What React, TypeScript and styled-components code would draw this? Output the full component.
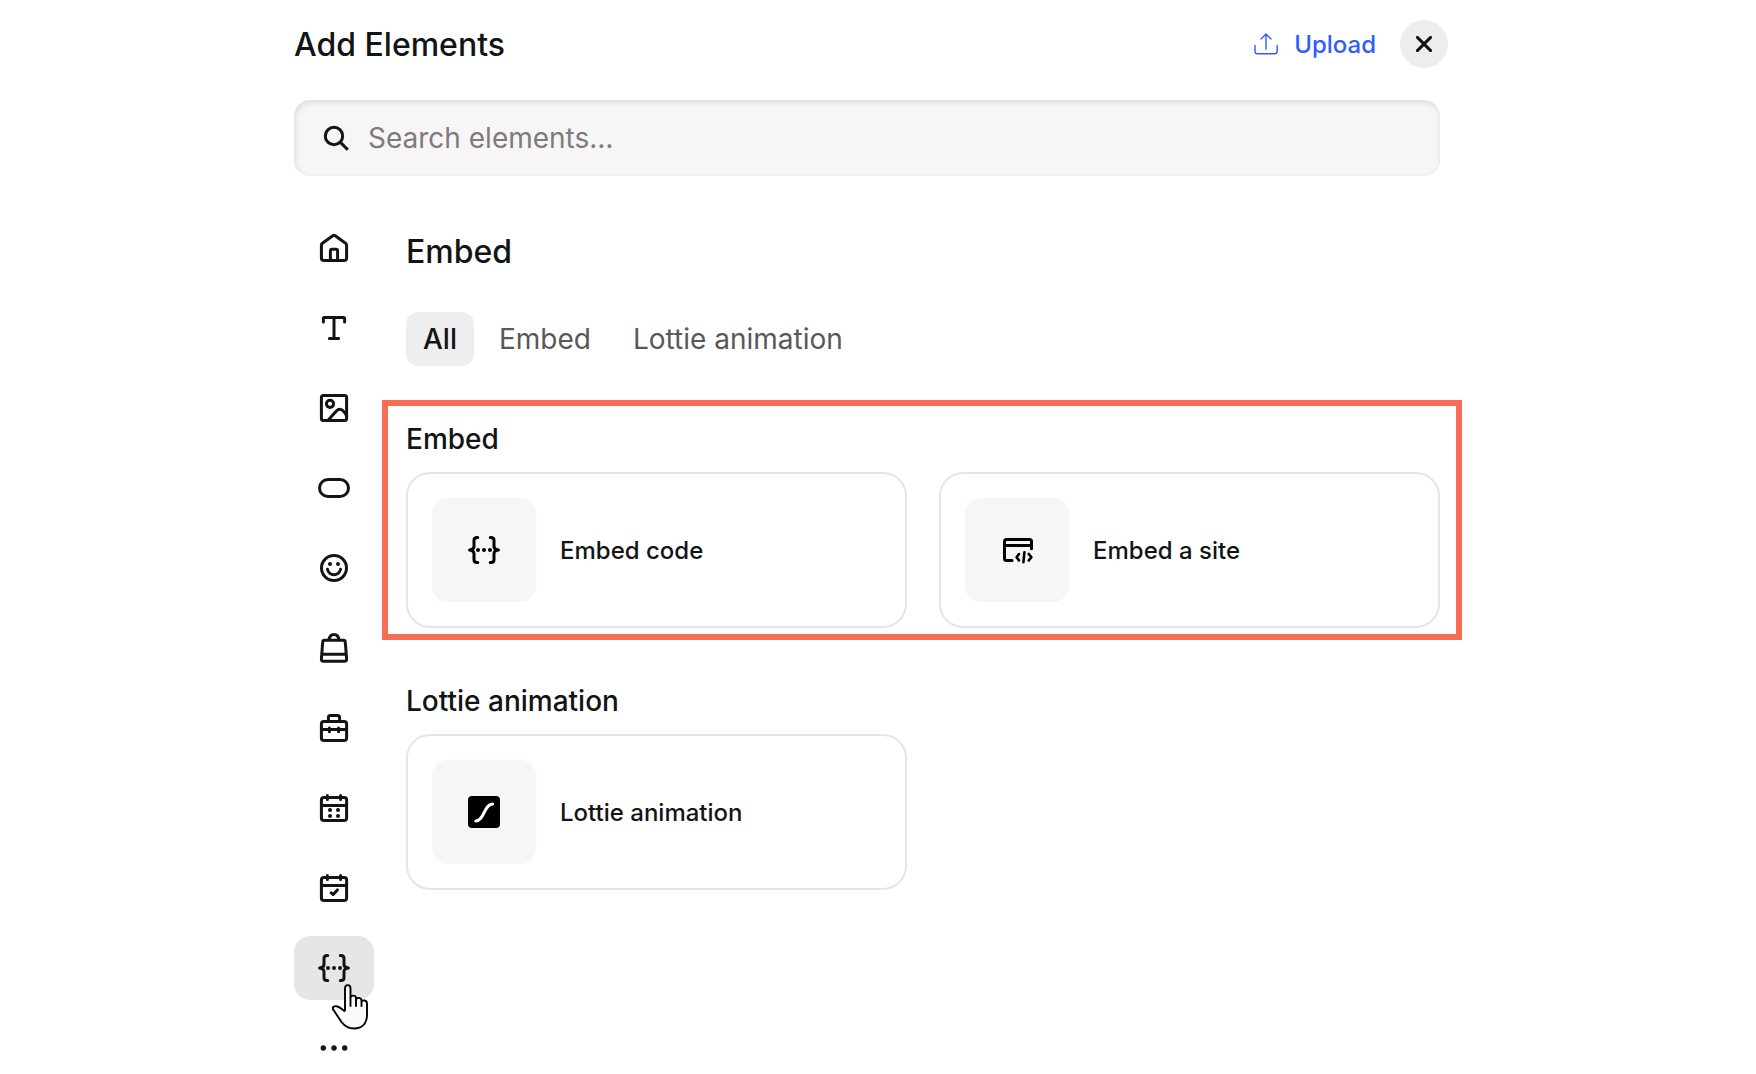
import React from 'react';
import styled, { createGlobalStyle } from 'styled-components';

const GlobalStyle = createGlobalStyle`
  *, *::before, *::after { box-sizing: border-box; }
  body {
    margin: 0;
    background: #fff;
    color: #131415;
    font-family: Inter, "Liberation Sans", sans-serif;
  }
  button, input { font: inherit; color: inherit; }
  button { border: 0; padding: 0; background: none; cursor: pointer; }
  h1, h2, h3 { margin: 0; font-weight: 500; }
`;

const Panel = styled.main`
  height: 100vh;
  max-width: 1168px;
  margin: 0 auto;
  overflow: hidden;
`;

const Header = styled.header`
  display: flex;
  align-items: center;
  gap: 24px;
  padding: 20px 14px 32px 0;
`;

const Title = styled.h1`
  flex: 1;
  padding-top: 2px;
  font-size: 32px;
  line-height: 46px;
`;

const Label = styled.span`
  padding-top: 2px;
  font-size: 24px;
  line-height: 32px;
  font-weight: 500;
`;

const UploadButton = styled.button`
  display: flex;
  align-items: center;
  gap: 16px;
  color: #2f5dff;
`;

const CloseButton = styled.button`
  display: grid;
  place-items: center;
  width: 48px;
  height: 48px;
  border-radius: 50%;
  background: #eee;
`;

const SearchBox = styled.label`
  display: flex;
  align-items: center;
  gap: 16px;
  height: 76px;
  margin-right: 22px;
  padding: 0 26px;
  border-radius: 16px;
  background: #f7f5f6;
  box-shadow: inset 1px 2px 6px rgba(0, 0, 0, 0.12);
`;

const SearchInput = styled.input`
  flex: 1;
  min-width: 0;
  border: 0;
  outline: 0;
  padding: 0;
  background: transparent;
  font-size: 28px;
  line-height: 36px;
  &::placeholder { color: #7d7b7c; opacity: 1; }
`;

const Body = styled.div`
  display: flex;
  gap: 8px;
  margin-top: 40px;
`;

const Sidebar = styled.nav`
  display: flex;
  flex-direction: column;
  gap: 16px;
  width: 80px;
  flex: none;
`;

const NavButton = styled.button<{ $active?: boolean }>`
  position: relative;
  display: grid;
  place-items: center;
  height: 64px;
  border-radius: 16px;
  background: ${(p) => (p.$active ? '#e6e6e6' : 'transparent')};
`;

const Pointer = styled.svg`
  position: absolute;
  z-index: 1;
  left: 38px;
  top: 48px;
`;

const Content = styled.div`
  flex: 1;
  min-width: 0;
`;

const Heading = styled.h2`
  padding: 16px 24px 20px;
  font-size: 32px;
  line-height: 40px;
`;

const Tabs = styled.div`
  display: flex;
  gap: 8px;
  padding: 20px 24px 34px;
`;

const Tab = styled.button<{ $active?: boolean }>`
  height: 54px;
  padding: 0 17px;
  border-radius: 12px;
  background: ${(p) => (p.$active ? '#eee' : 'transparent')};
  color: ${(p) => (p.$active ? '#131415' : '#595858')};
  font-size: 28px;
  line-height: 36px;
  font-weight: ${(p) => (p.$active ? 500 : 400)};
`;

const Section = styled.section<{ $highlighted?: boolean }>`
  margin-bottom: 22px;
  padding: 12px 16px 6px 18px;
  border: 6px solid ${(p) => (p.$highlighted ? '#f86d56' : 'transparent')};
`;

const SectionTitle = styled.h3`
  margin-bottom: 12px;
  font-size: 28px;
  line-height: 42px;
`;

const CardGrid = styled.div`
  display: grid;
  grid-template-columns: 1fr 1fr;
  gap: 32px;
`;

const Card = styled.button`
  display: flex;
  align-items: center;
  gap: 24px;
  padding: 24px;
  border: 2px solid #e5e5e5;
  border-radius: 24px;
  background: #fff;
  text-align: left;
`;

const Thumb = styled.span`
  display: grid;
  place-items: center;
  width: 104px;
  height: 104px;
  border-radius: 16px;
  background: #f7f5f6;
  color: #000;
`;

const Svg = styled.svg<{ $stroke?: number }>`
  display: block;
  fill: none;
  stroke: currentColor;
  stroke-width: ${(p) => p.$stroke ?? 3};
  stroke-linecap: round;
  stroke-linejoin: round;
`;

const Icon = ({ children }: { children: React.ReactNode }) => (
  <Svg width="32" height="32" viewBox="0 0 32 32" aria-hidden="true">
    {children}
  </Svg>
);

const Dot = ({ x, y, r = 2 }: { x: number; y: number; r?: number }) => (
  <circle cx={x} cy={y} r={r} fill="currentColor" stroke="none" />
);

const HomeIcon = () => (
  <Icon>
    <path d="M3.4 13.2v12.9q0 2.5 2.5 2.5h20.2q2.5 0 2.5-2.5V13.2q0-1.3-1-2L17.2 3.7q-1.2-.9-2.4 0L4.4 11.2q-1 .7-1 2Z" />
    <path d="M12.4 28.6V19q0-1.7 1.7-1.7h3.8q1.7 0 1.7 1.7v9.600" />
  </Icon>
);

const TextIcon = () => (
  <Icon>
    <path d="M5.4 10V6.4q0-1 1-1h19.2q1 0 1 1V10M16 5.4v21.2M11.4 26.6h9.2" />
  </Icon>
);

const ImageIcon = () => (
  <Icon>
    <rect x="3.4" y="3.4" width="25.2" height="25.2" rx="2" />
    <circle cx="12" cy="11.8" r="3.6" />
    <path d="M9.8 28.4l8.600-9.400q3-3.200 6.200-.6 2.600 2.200 4 5.600" />
  </Icon>
);

const ButtonIcon = () => (
  <Icon>
    <rect x="1.500" y="7.500" width="29" height="17" rx="8.500" />
  </Icon>
);

const SmileIcon = () => (
  <Icon>
    <circle cx="16" cy="16" r="12.500" />
    <Dot x={12} y={12} />
    <Dot x={20} y={12} />
    <path d="M9.500 17.300c1.200 7.200 11.800 7.200 13 0" />
  </Icon>
);

const BagIcon = () => (
  <Icon>
    <path d="M6.700 8.300h18.600q1.900 0 2 1.900l1.300 16.600q.2 2.500-2.200 2.500H5.600q-2.400 0-2.200-2.500L4.700 10.200q.1-1.900 2-1.900ZM4 22.300h24" />
    <path d="M11 7.600c1.200-6.900 8.800-6.900 10 0" />
  </Icon>
);

const BriefcaseIcon = () => (
  <Icon>
    <rect x="3.4" y="9.4" width="25.2" height="19.2" rx="2.500" />
    <path d="M10.400 9V5.400q0-2 2-2h7.200q2 0 2 2V9M3.400 17.600h25.200M11.400 16v3.800M20.600 16v3.800" />
  </Icon>
);

const CalendarFrame = () => (
  <>
    <rect x="3.4" y="5.4" width="25.2" height="23.2" rx="2.500" />
    <path d="M3.400 13.400h25.200M9.400 3.400v4.200M22.600 3.400v4.200" />
  </>
);

const CalendarIcon = () => (
  <Icon>
    <CalendarFrame />
    <Dot x={12} y={18} />
    <Dot x={20} y={18} />
    <Dot x={12} y={24} />
    <Dot x={20} y={24} />
  </Icon>
);

const CalendarCheckIcon = () => (
  <Icon>
    <CalendarFrame />
    <path d="M13.200 20.900l2 1.600 4.200-4.600" />
  </Icon>
);

const BracesIcon = () => (
  <Icon>
    <path d="M9.700 3.400H9Q6 3.400 6 6.400v6q0 3-4.400 3.600Q6 16.600 6 19.600v6q0 3 3 3h.7" />
    <path d="M22.300 3.400h.7q3 0 3 3v6q0 3 4.400 3.600-4.400.6-4.400 3.600v6q0 3-3 3h-.7" />
    <Dot x={10} y={16} />
    <Dot x={16} y={16} />
    <Dot x={22} y={16} />
  </Icon>
);

const MoreIcon = () => (
  <Icon>
    <Dot x={5.3} y={16} r={2.7} />
    <Dot x={16} y={16} r={2.7} />
    <Dot x={26.7} y={16} r={2.7} />
  </Icon>
);

const SiteIcon = () => (
  <Icon>
    <path d="M11 26.600H5.500q-2 0-2-2V7.500q0-2 2-2h23q2 0 2 2v7.200M3.500 11.500h27" />
    <path d="M18 20l-2.400 3.200L18 26.400M27.800 20l2.600 3.200-2.600 3.200M23.400 18.200l-1 10" strokeWidth="2.600" />
  </Icon>
);

const LottieIcon = () => (
  <Icon>
    <rect width="32" height="32" rx="4" fill="#000" stroke="none" />
    <path d="M7.800 25c8.400 0 8.200-17 16.800-17" stroke="#fff" />
  </Icon>
);

const UploadIcon = () => (
  <Svg width="24" height="24" viewBox="0 0 24 24" $stroke={1.4} aria-hidden="true">
    <path d="M1 13.500v5.700q0 2.600 2.600 2.600h17q2.600 0 2.600-2.600v-5.700M12 17.300V2M7 7l5-5 5 5" />
  </Svg>
);

const CloseIcon = () => (
  <Svg width="16" height="16" viewBox="0 0 16 16" aria-hidden="true">
    <path d="M1.400 1.400l13.200 13.200M14.600 1.400L1.400 14.600" />
  </Svg>
);

const SearchIcon = () => (
  <Svg width="32" height="32" viewBox="0 0 32 32" aria-hidden="true">
    <circle cx="14" cy="14" r="8.700" />
    <path d="M20.400 20.400l7.400 7.400" strokeLinecap="butt" />
  </Svg>
);

const PointerIcon = () => (
  <Pointer width="37" height="46" viewBox="0 0 37 46" aria-hidden="true">
    <path
      d="M13 27V4.500C13 0 18.500 0 18.500 4.500V22v-8.500c1-2.500 5-2.500 5.500 0V22v-6.500c1-2.500 5-2 5.500.5v6-4c1-2.500 5.500-2 5.500 1.500v11c0 9-5 14-13 14-6 0-9.500-2.500-12.500-6.500L1.500 26c-2-3 1-4.500 4-3.500 3 1 5 3 7.500 5"
      fill="#fafafa"
      stroke="#000"
      strokeWidth="1.900"
      strokeLinejoin="round"
    />
  </Pointer>
);

const navItems = [
  { label: 'Quick Add', icon: <HomeIcon /> },
  { label: 'Text', icon: <TextIcon /> },
  { label: 'Media', icon: <ImageIcon /> },
  { label: 'Buttons', icon: <ButtonIcon /> },
  { label: 'Decorative', icon: <SmileIcon /> },
  { label: 'Store', icon: <BagIcon /> },
  { label: 'Business', icon: <BriefcaseIcon /> },
  { label: 'Events', icon: <CalendarIcon /> },
  { label: 'Bookings', icon: <CalendarCheckIcon /> },
  { label: 'Embed', icon: <BracesIcon />, active: true },
  { label: 'More', icon: <MoreIcon /> },
];

const tabs = ['All', 'Embed', 'Lottie animation'];

const sections = [
  {
    title: 'Embed',
    highlighted: true,
    cards: [
      { label: 'Embed code', icon: <BracesIcon /> },
      { label: 'Embed a site', icon: <SiteIcon /> },
    ],
  },
  {
    title: 'Lottie animation',
    highlighted: false,
    cards: [{ label: 'Lottie animation', icon: <LottieIcon /> }],
  },
];

export default function App() {
  return (
    <>
      <GlobalStyle />
      <Panel>
        <Header>
          <Title>Add Elements</Title>
          <UploadButton type="button">
            <UploadIcon />
            <Label>Upload</Label>
          </UploadButton>
          <CloseButton type="button" aria-label="Close">
            <CloseIcon />
          </CloseButton>
        </Header>
        <SearchBox>
          <SearchIcon />
          <SearchInput type="text" placeholder="Search elements…" aria-label="Search elements" />
        </SearchBox>
        <Body>
          <Sidebar aria-label="Element categories">
            {navItems.map((item) => (
              <NavButton key={item.label} type="button" aria-label={item.label} $active={item.active}>
                {item.icon}
                {item.active && <PointerIcon />}
              </NavButton>
            ))}
          </Sidebar>
          <Content>
            <Heading>Embed</Heading>
            <Tabs>
              {tabs.map((tab, i) => (
                <Tab key={tab} type="button" $active={i === 0}>
                  {tab}
                </Tab>
              ))}
            </Tabs>
            {sections.map((section) => (
              <Section key={section.title} $highlighted={section.highlighted}>
                <SectionTitle>{section.title}</SectionTitle>
                <CardGrid>
                  {section.cards.map((card) => (
                    <Card key={card.label} type="button">
                      <Thumb>{card.icon}</Thumb>
                      <Label>{card.label}</Label>
                    </Card>
                  ))}
                </CardGrid>
              </Section>
            ))}
          </Content>
        </Body>
      </Panel>
    </>
  );
}
